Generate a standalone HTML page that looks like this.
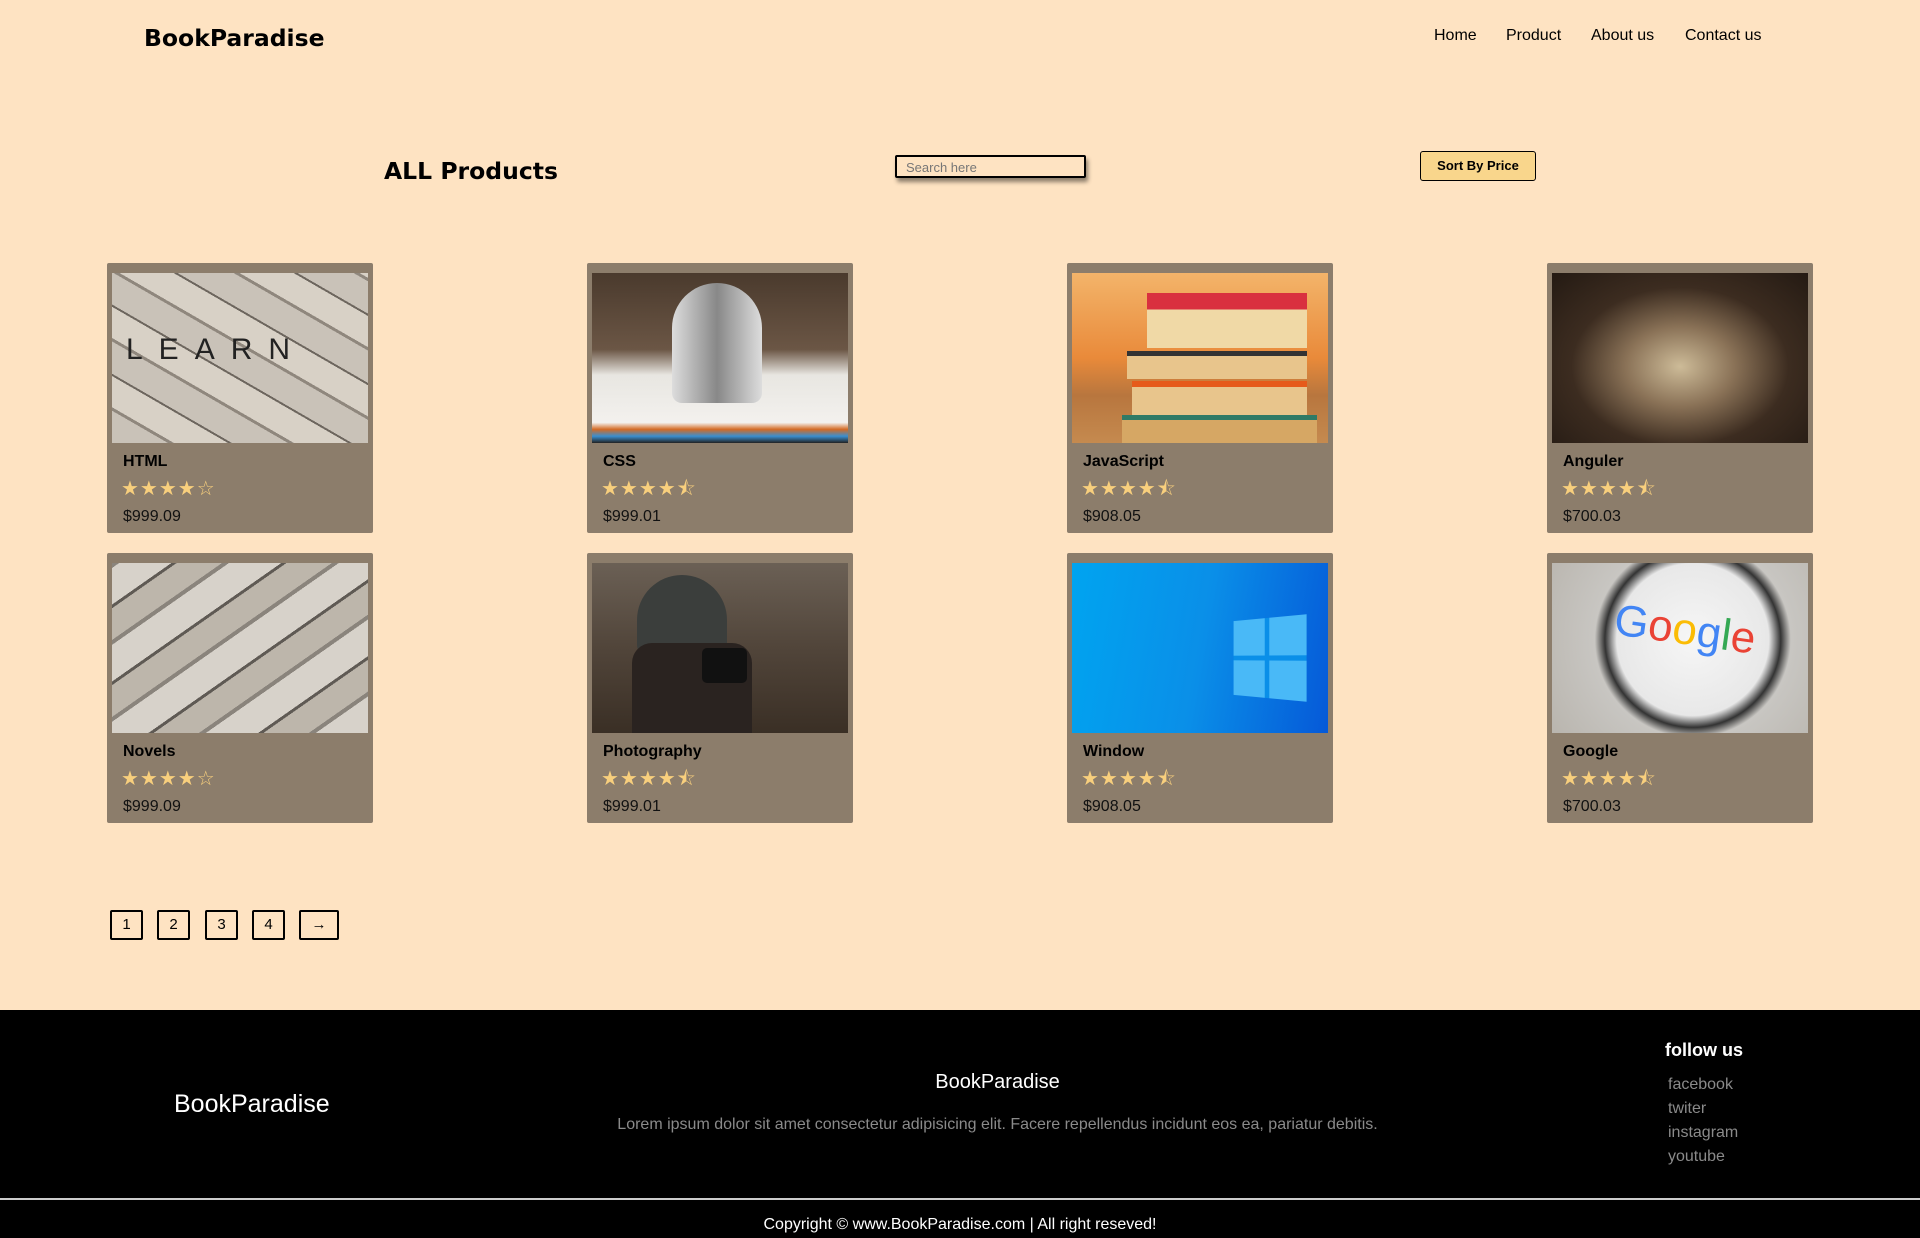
<!DOCTYPE html>
<html><head><meta charset="utf-8"><style>
*{margin:0;padding:0;box-sizing:border-box}
body{width:1920px;height:1238px;background:#fee3c2;font-family:"Liberation Sans",Arial,sans-serif;position:relative;overflow:hidden}
.abs{position:absolute}
.logo{left:144px;top:24px;font-family:"DejaVu Sans",sans-serif;font-weight:bold;font-size:23.5px;color:#000}
.nav{top:27px;font-size:16px;color:#000}
.title{left:384px;top:157px;font-family:"DejaVu Sans",sans-serif;font-weight:bold;font-size:23.5px}
.search{left:895px;top:155px;width:191px;height:23px;border:2px solid #000;border-radius:2px;box-shadow:2px 4px 4px rgba(0,0,0,.45);font-size:13px;color:#777;padding:3px 9px;background:#fee3c2}
.sort{left:1420px;top:151px;width:116px;height:30px;background:#f9d68c;border:1px solid #000;border-radius:3px;font-size:13px;font-weight:bold;text-align:center;line-height:28px}
.card{width:266px;height:270px;background:#8c7d6b;border-radius:2px}
.img{position:absolute;left:5px;top:10px;width:256px;height:170px;overflow:hidden}
.card h4{position:absolute;left:16px;top:190px;font-size:16px;font-weight:bold;color:#000}
.stars{position:absolute;left:14px;top:216px;font-size:20px;color:#f8cf7d;letter-spacing:1px;line-height:20px}
.price{position:absolute;left:16px;top:245px;font-size:16px;color:#111}
.pg{top:910px;width:33px;height:30px;border:2px solid #000;border-radius:2px;font-size:15px;text-align:center;line-height:26px}
footer{position:absolute;left:0;top:1010px;width:1920px;height:228px;background:#000;color:#fff}
</style></head><body>
<div class="abs logo">BookParadise</div>
<div class="abs nav" style="left:1434px">Home</div>
<div class="abs nav" style="left:1506px">Product</div>
<div class="abs nav" style="left:1591px">About us</div>
<div class="abs nav" style="left:1685px">Contact us</div>
<div class="abs title">ALL Products</div>
<div class="abs search">Search here</div>
<div class="abs sort">Sort By Price</div>

<div class="abs card" style="left:107px;top:263px"><div class="img" style="background:repeating-linear-gradient(30deg,#c9c2b8 0 28px,#8f877d 28px 31px,#d8d1c6 31px 58px,#6d665e 58px 60px)"><div style="position:absolute;left:14px;top:60px;width:230px;font-size:30px;letter-spacing:16px;color:#222">LEARN</div></div><h4>HTML</h4><div class="stars">★★★★☆</div><div class="price">$999.09</div></div>
<div class="abs card" style="left:587px;top:263px"><div class="img" style="background:linear-gradient(180deg,#4a3a2d 0,#6b5645 45%,#e8e6e1 60%,#f3f1ee 88%,#d46a24 92%,#3a8fd0 96%,#222 100%)"><div style="position:absolute;left:80px;top:10px;width:90px;height:120px;border-radius:45px 45px 10px 10px;background:linear-gradient(90deg,#ddd,#888,#ddd)"></div></div><h4>CSS</h4><div class="stars">★★★★⯪</div><div class="price">$999.01</div></div>
<div class="abs card" style="left:1067px;top:263px"><div class="img" style="background:linear-gradient(180deg,#f3b46a 0,#e98a3a 50%,#b8763e 72%,#c58a4f 100%)"><div style="position:absolute;left:75px;top:20px;width:160px;height:55px;background:linear-gradient(180deg,#d9303f 0 30%,#f0d9a6 30%)"></div><div style="position:absolute;left:55px;top:78px;width:180px;height:28px;background:#e8c58c;border-top:5px solid #333"></div><div style="position:absolute;left:60px;top:108px;width:175px;height:35px;background:#e8c58c;border-top:6px solid #e65a1a"></div><div style="position:absolute;left:50px;top:142px;width:195px;height:28px;background:#d6a764;border-top:5px solid #2f7a66"></div></div><h4>JavaScript</h4><div class="stars">★★★★⯪</div><div class="price">$908.05</div></div>
<div class="abs card" style="left:1547px;top:263px"><div class="img" style="background:radial-gradient(ellipse at 50% 55%,#cdbb98 0,#8a7257 30%,#3c2c20 60%,#241a13 100%)"></div><h4>Anguler</h4><div class="stars">★★★★⯪</div><div class="price">$700.03</div></div>

<div class="abs card" style="left:107px;top:553px"><div class="img" style="background:repeating-linear-gradient(-35deg,#d7d2ca 0 30px,#8a847c 30px 34px,#bdb6ab 34px 60px,#5f5a54 60px 63px)"></div><h4>Novels</h4><div class="stars">★★★★☆</div><div class="price">$999.09</div></div>
<div class="abs card" style="left:587px;top:553px"><div class="img" style="background:linear-gradient(180deg,#6b6055 0,#51453a 50%,#3a2f25 100%)"><div style="position:absolute;left:45px;top:12px;width:90px;height:80px;border-radius:45px 45px 10px 10px;background:#3b3e3c"></div><div style="position:absolute;left:40px;top:80px;width:120px;height:90px;background:#2a2320;border-radius:20px 20px 0 0"></div><div style="position:absolute;left:110px;top:85px;width:45px;height:35px;background:#111;border-radius:5px"></div></div><h4>Photography</h4><div class="stars">★★★★⯪</div><div class="price">$999.01</div></div>
<div class="abs card" style="left:1067px;top:553px"><div class="img" style="background:linear-gradient(100deg,#00a4f0 0,#0a8fe8 50%,#0559d8 100%)"><div style="position:absolute;left:155px;top:55px;width:80px;height:80px;background:linear-gradient(90deg,transparent 47%,#0a8fe8 47% 53%,transparent 53%),linear-gradient(180deg,transparent 47%,#0a8fe8 47% 53%,transparent 53%),#49b9f7;transform:perspective(200px) rotateY(-25deg)"></div></div><h4>Window</h4><div class="stars">★★★★⯪</div><div class="price">$908.05</div></div>
<div class="abs card" style="left:1547px;top:553px"><div class="img" style="background:radial-gradient(circle at 55% 45%,#f6f6f6 0,#e8e8e8 45%,#333 52%,#c8c6c2 58%,#b9b5ae 100%)"><div style="position:absolute;left:62px;top:42px;font-size:44px;font-family:'Liberation Sans',sans-serif;transform:rotate(8deg)"><span style="color:#4285f4">G</span><span style="color:#ea4335">o</span><span style="color:#fbbc05">o</span><span style="color:#4285f4">g</span><span style="color:#34a853">l</span><span style="color:#ea4335">e</span></div></div><h4>Google</h4><div class="stars">★★★★⯪</div><div class="price">$700.03</div></div>

<div class="abs pg" style="left:110px">1</div>
<div class="abs pg" style="left:157px">2</div>
<div class="abs pg" style="left:205px">3</div>
<div class="abs pg" style="left:252px">4</div>
<div class="abs pg" style="left:299px;width:40px">→</div>

<footer>
<div class="abs" style="left:174px;top:80px;font-size:25px">BookParadise</div>
<div class="abs" style="left:0;width:1995px;text-align:center;top:61px;font-size:20px">BookParadise</div>
<div class="abs" style="left:0;width:1995px;text-align:center;top:106px;font-size:16px;color:#8a8a8a">Lorem ipsum dolor sit amet consectetur adipisicing elit. Facere repellendus incidunt eos ea, pariatur debitis.</div>
<div class="abs" style="left:1665px;top:30px;font-size:18px;font-weight:bold">follow us</div>
<div class="abs" style="left:1668px;top:63px;font-size:16px;color:#8a8a8a;line-height:24px">facebook<br>twiter<br>instagram<br>youtube</div>
<div class="abs" style="left:0;top:188px;width:1920px;height:2px;background:#ccc"></div>
<div class="abs" style="left:0;top:206px;width:1920px;text-align:center;font-size:16px">Copyright © www.BookParadise.com | All right reseved!</div>
</footer>
</body></html>
